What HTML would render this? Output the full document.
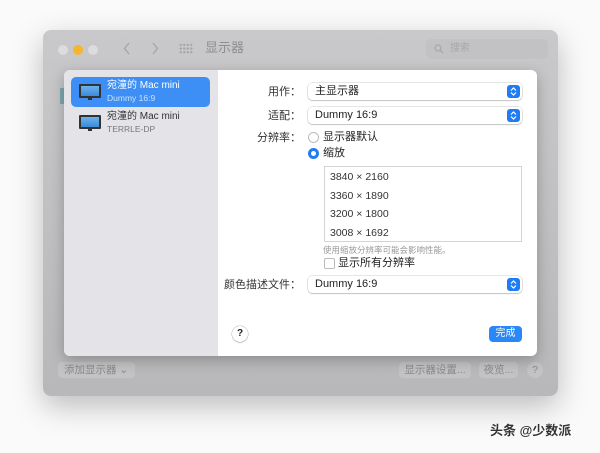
<!DOCTYPE html>
<html><head><meta charset="utf-8"><style>
*{margin:0;padding:0;box-sizing:border-box}
body{width:600px;height:453px;background:#fafafa;position:relative;overflow:hidden;font-family:"Liberation Sans","Noto Sans CJK SC",sans-serif;font-size:11px;line-height:14px;color:#222}
.a{position:absolute}
.win{left:43px;top:30px;width:515px;height:366px;background:linear-gradient(#c9c8ca,#b8b7b9);border-radius:8px;box-shadow:0 10px 30px rgba(0,0,0,.25)}
.sheet{left:64px;top:70px;width:473px;height:286px;background:#fff;border-radius:6px;overflow:hidden;box-shadow:0 4px 14px rgba(0,0,0,.25)}
.side{left:0;top:0;width:154px;height:286px;background:#e4e3e7}
.sel{left:7px;top:7px;width:139px;height:30px;background:#3d8ef5;border-radius:5px}
.mon{width:22px;height:14px;border:2px solid #333;background:linear-gradient(#6ab2ef,#3d8ad8);border-radius:1px}
.pop{height:17px;border-radius:4px;background:#fff;box-shadow:0 0 0 .5px rgba(0,0,0,.2),0 1px 1px rgba(0,0,0,.15);font-size:11px;padding-left:7px;line-height:17px}
.arr{position:absolute;right:2px;top:2px;width:13px;height:13px;border-radius:3px;background:#1f7cf5}
.lbl{text-align:right;width:100px;font-size:11px;color:#333}
.rad{width:11px;height:11px;border-radius:50%;border:1px solid #bbb;background:#fff}
.btn{background:#c3c2c4;border-radius:4px;color:#8a898b;font-size:10.5px;text-align:center;line-height:16px;height:16px}
</style></head><body>
<div class="a win">
 <div class="a" style="left:15px;top:15px;width:10px;height:10px;border-radius:50%;background:#dcdbdd"></div>
 <div class="a" style="left:30px;top:15px;width:10px;height:10px;border-radius:50%;background:#f6b52c"></div>
 <div class="a" style="left:45px;top:15px;width:10px;height:10px;border-radius:50%;background:#dcdbdd"></div>
 <svg class="a" style="left:80px;top:12px" width="8" height="13"><path d="M6 1L1.5 6.5 6 12" stroke="#a5a4a6" stroke-width="1.3" fill="none"/></svg>
 <svg class="a" style="left:108px;top:12px" width="8" height="13"><path d="M2 1l4.5 5.5L2 12" stroke="#a5a4a6" stroke-width="1.3" fill="none"/></svg>
 <div class="a" style="left:136px;top:13px;width:14px;height:11px;background:radial-gradient(circle,#a5a4a6 1px,transparent 1.3px) 0 0/3.5px 3.7px"></div>
 <div class="a" style="left:162px;top:11px;font-size:13px;color:#8e8d8f">显示器</div>
 <div class="a" style="left:383px;top:9px;width:122px;height:20px;background:#c2c1c3;border-radius:5px;color:#a8a7a9;font-size:10px;line-height:20px;padding-left:24px">搜索
  <svg class="a" style="left:8px;top:5px" width="10" height="10"><circle cx="4" cy="4" r="3" stroke="#a8a7a9" fill="none" stroke-width="1.2"/><path d="M6.3 6.3L9 9" stroke="#a8a7a9" stroke-width="1.3"/></svg></div>
 <div class="a" style="left:17px;top:58px;width:5px;height:16px;background:#7fa8b0"></div>
 <div class="a btn" style="left:15px;top:332px;width:77px;text-align:left;padding-left:6px">添加显示器 ⌄</div>
 <div class="a btn" style="left:356px;top:332px;width:72px">显示器设置...</div>
 <div class="a btn" style="left:436px;top:332px;width:39px">夜览...</div>
 <div class="a btn" style="left:484px;top:332px;width:16px;border-radius:50%">?</div>
</div>
<div class="a sheet">
 <div class="a side">
  <div class="a sel"></div>
  <div class="a mon" style="left:15px;top:14px"></div>
  <div class="a" style="left:24px;top:28px;width:4px;height:2px;background:#333"></div>
  <div class="a" style="left:43px;top:10px;color:#fff;font-size:10px;line-height:12px">宛潼的 Mac mini</div>
  <div class="a" style="left:43px;top:23px;color:#cfe2fc;font-size:8.5px;line-height:10px">Dummy 16:9</div>
  <div class="a mon" style="left:15px;top:45px"></div>
  <div class="a" style="left:24px;top:59px;width:4px;height:2px;background:#333"></div>
  <div class="a" style="left:43px;top:41px;color:#333;font-size:10px;line-height:12px">宛潼的 Mac mini</div>
  <div class="a" style="left:43px;top:54px;color:#777;font-size:8.5px;line-height:10px">TERRLE-DP</div>
 </div>
 <div class="a lbl" style="left:137px;top:15px">用作：</div>
 <div class="a pop" style="left:244px;top:13px;width:214px">主显示器<svg class="arr" viewBox="0 0 13 13"><path d="M4 5.5l2.5-2.5 2.5 2.5M4 7.5l2.5 2.5 2.5-2.5" stroke="#fff" stroke-width="1.2" fill="none"/></svg></div>
 <div class="a lbl" style="left:137px;top:39px">适配：</div>
 <div class="a pop" style="left:244px;top:37px;width:214px">Dummy 16:9<svg class="arr" viewBox="0 0 13 13"><path d="M4 5.5l2.5-2.5 2.5 2.5M4 7.5l2.5 2.5 2.5-2.5" stroke="#fff" stroke-width="1.2" fill="none"/></svg></div>
 <div class="a lbl" style="left:137px;top:61px">分辨率：</div>
 <div class="a rad" style="left:244px;top:62px"></div>
 <div class="a" style="left:259px;top:60px">显示器默认</div>
 <div class="a rad" style="left:244px;top:78px;border:3.5px solid #1f7cf5"></div>
 <div class="a" style="left:259px;top:76px">缩放</div>
 <div class="a" style="left:260px;top:96px;width:198px;height:76px;border:1px solid #d4d4d4;font-size:10.5px;line-height:18.5px;padding:1px 0 0 5px;color:#333">3840 × 2160<br>3360 × 1890<br>3200 × 1800<br>3008 × 1692</div>
 <div class="a" style="left:259px;top:173px;font-size:8.5px;color:#999">使用缩放分辨率可能会影响性能。</div>
 <div class="a" style="left:260px;top:188px;width:11px;height:11px;border:1px solid #bbb;border-radius:2px"></div>
 <div class="a" style="left:274px;top:186px">显示所有分辨率</div>
 <div class="a lbl" style="left:137px;top:208px">颜色描述文件：</div>
 <div class="a pop" style="left:244px;top:206px;width:214px">Dummy 16:9<svg class="arr" viewBox="0 0 13 13"><path d="M4 5.5l2.5-2.5 2.5 2.5M4 7.5l2.5 2.5 2.5-2.5" stroke="#fff" stroke-width="1.2" fill="none"/></svg></div>
 <div class="a" style="left:168px;top:256px;width:16px;height:16px;border-radius:50%;box-shadow:0 0 0 .5px rgba(0,0,0,.25),0 1px 1px rgba(0,0,0,.15);text-align:center;line-height:16px;font-weight:bold;font-size:10px">?</div>
 <div class="a" style="left:425px;top:256px;width:33px;height:16px;border-radius:4px;background:#2a87f7;color:#fff;text-align:center;line-height:16px;font-size:10px">完成</div>
</div>
<div class="a" style="left:490px;top:424px;font-size:13px;font-weight:bold;color:#333;text-shadow:1px 1px 0 #fff">头条 @少数派</div>
</body></html>
